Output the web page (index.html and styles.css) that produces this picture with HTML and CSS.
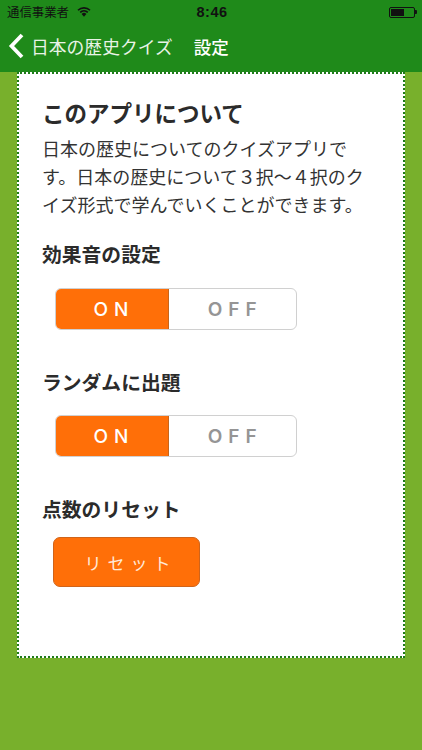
FILE: index.html
```html
<!DOCTYPE html>
<html lang="ja">
<head>
<meta charset="utf-8">
<title>設定</title>
<link rel="stylesheet" href="styles.css">
</head>
<body>
<header class="top">
  <div class="status">
    <div class="status-left">
      <span class="carrier">通信事業者</span>
      <svg class="wifi" width="14" height="10" viewBox="0 0 14 10"><path d="M7 9.8 L4.6 7 A3.4 3.4 0 0 1 9.4 7 Z" fill="#111"/><path d="M3.2 5.4 A5.6 5.6 0 0 1 10.8 5.4" fill="none" stroke="#111" stroke-width="1.6"/><path d="M1 3.3 A8.6 8.6 0 0 1 13 3.3" fill="none" stroke="#111" stroke-width="1.6"/></svg>
    </div>
    <div class="time">8:46</div>
    <div class="status-right">
      <div class="battery"><div class="battery-fill"></div></div>
      <div class="battery-tip"></div>
    </div>
  </div>
  <nav class="nav">
    <svg class="chevron" width="16" height="26" viewBox="0 0 16 26"><path d="M14 2 L3.5 13 L14 24" fill="none" stroke="#fff" stroke-width="3.8"/></svg>
    <span class="back">日本の歴史クイズ</span>
    <span class="title">設定</span>
  </nav>
</header>
<main class="card">
  <h1>このアプリについて</h1>
  <p class="desc">日本の歴史についてのクイズアプリです。日本の歴史について３択〜４択のクイズ形式で学んでいくことができます。</p>
  <h2 class="h-sound">効果音の設定</h2>
  <div class="toggle"><div class="on">ON</div><div class="off">OFF</div></div>
  <h2 class="h-random">ランダムに出題</h2>
  <div class="toggle"><div class="on">ON</div><div class="off">OFF</div></div>
  <h2 class="h-reset">点数のリセット</h2>
  <button class="reset">リセット</button>
</main>
</body>
</html>
```
FILE: styles.css
```css
* { box-sizing: border-box; }
html, body { margin: 0; padding: 0; }
body {
  width: 422px;
  height: 750px;
  background: #78b02c;
  overflow: hidden;
  font-family: "Noto Sans CJK JP", "Noto Sans", sans-serif;
  color: #2b2b2b;
}
.top { height: 72px; background: #1f8a1a; display: flex; flex-direction: column; }
.status { height: 24px; display: flex; align-items: center; justify-content: space-between; padding: 0 5px 0 7px; }
.status-left { display: flex; align-items: center; gap: 8px; width: 120px; }
.carrier { font-size: 12.4px; color: #111; }
.wifi { display: block; }
.time { font-family: "Liberation Sans", sans-serif; font-weight: 700; font-size: 14.5px; color: #111; letter-spacing: .5px; }
.status-right { display: flex; align-items: center; justify-content: flex-end; width: 120px; }
.battery { width: 26px; height: 11px; border: 1px solid #111; border-radius: 2px; padding: 1px; }
.battery-fill { width: 13px; height: 100%; background: #111; }
.battery-tip { width: 2px; height: 4px; background: #111; border-radius: 0 1px 1px 0; }
.nav { height: 48px; display: flex; align-items: center; padding: 0 0 4px 8px; color: #fff; }
.chevron { display: block; flex: none; }
.back { font-size: 17.8px; margin-left: 7px; color: #e9f3e6; white-space: nowrap; }
.title { font-size: 17.5px; font-weight: 500; margin-left: 21px; }
.card {
  width: 388px;
  height: 586px;
  margin-left: 17px;
  background: #fff;
  border: 2px dotted #1f7a1a;
  padding: 22px 24px 0 23px;
}
h1 { font-size: 22.5px; font-weight: 700; line-height: 32px; margin: 0; }
.desc { font-size: 18px; line-height: 28px; margin: 6px 0 0; color: #333; }
h2 { font-size: 19.8px; font-weight: 700; line-height: 28px; margin: 0; }
.h-sound { margin-top: 22px; }
.h-random { margin-top: 38px; }
.h-reset { margin-top: 38px; }
.toggle { display: flex; width: 242px; height: 42px; margin: 20px 0 0 13px; border-radius: 6px; overflow: hidden; border: 1.5px solid #d0d0d0; font-family: "Inter", sans-serif; font-weight: 500; font-size: 19px; letter-spacing: 6px; }
.toggle + h2 + .toggle { margin-top: 19px; }
.on { width: 114px; margin: -1.5px 0 -1.5px -1.5px; padding-left: 6px; background: #ff6f08; color: #fff; display: flex; align-items: center; justify-content: center; border-right: 1px solid #c8651a; }
.off { flex: 1; color: #959595; font-weight: 600; display: flex; align-items: center; justify-content: center; padding-left: 6px; }
.reset { display: block; width: 147px; height: 50px; margin: 14px 0 0 11px; padding: 0 0 0 8px; background: #ff6f08; color: #ffe9d8; border: 1px solid #d0641a; border-radius: 7px; font-family: "Noto Sans CJK JP", sans-serif; font-size: 17px; letter-spacing: 6px; }
```
